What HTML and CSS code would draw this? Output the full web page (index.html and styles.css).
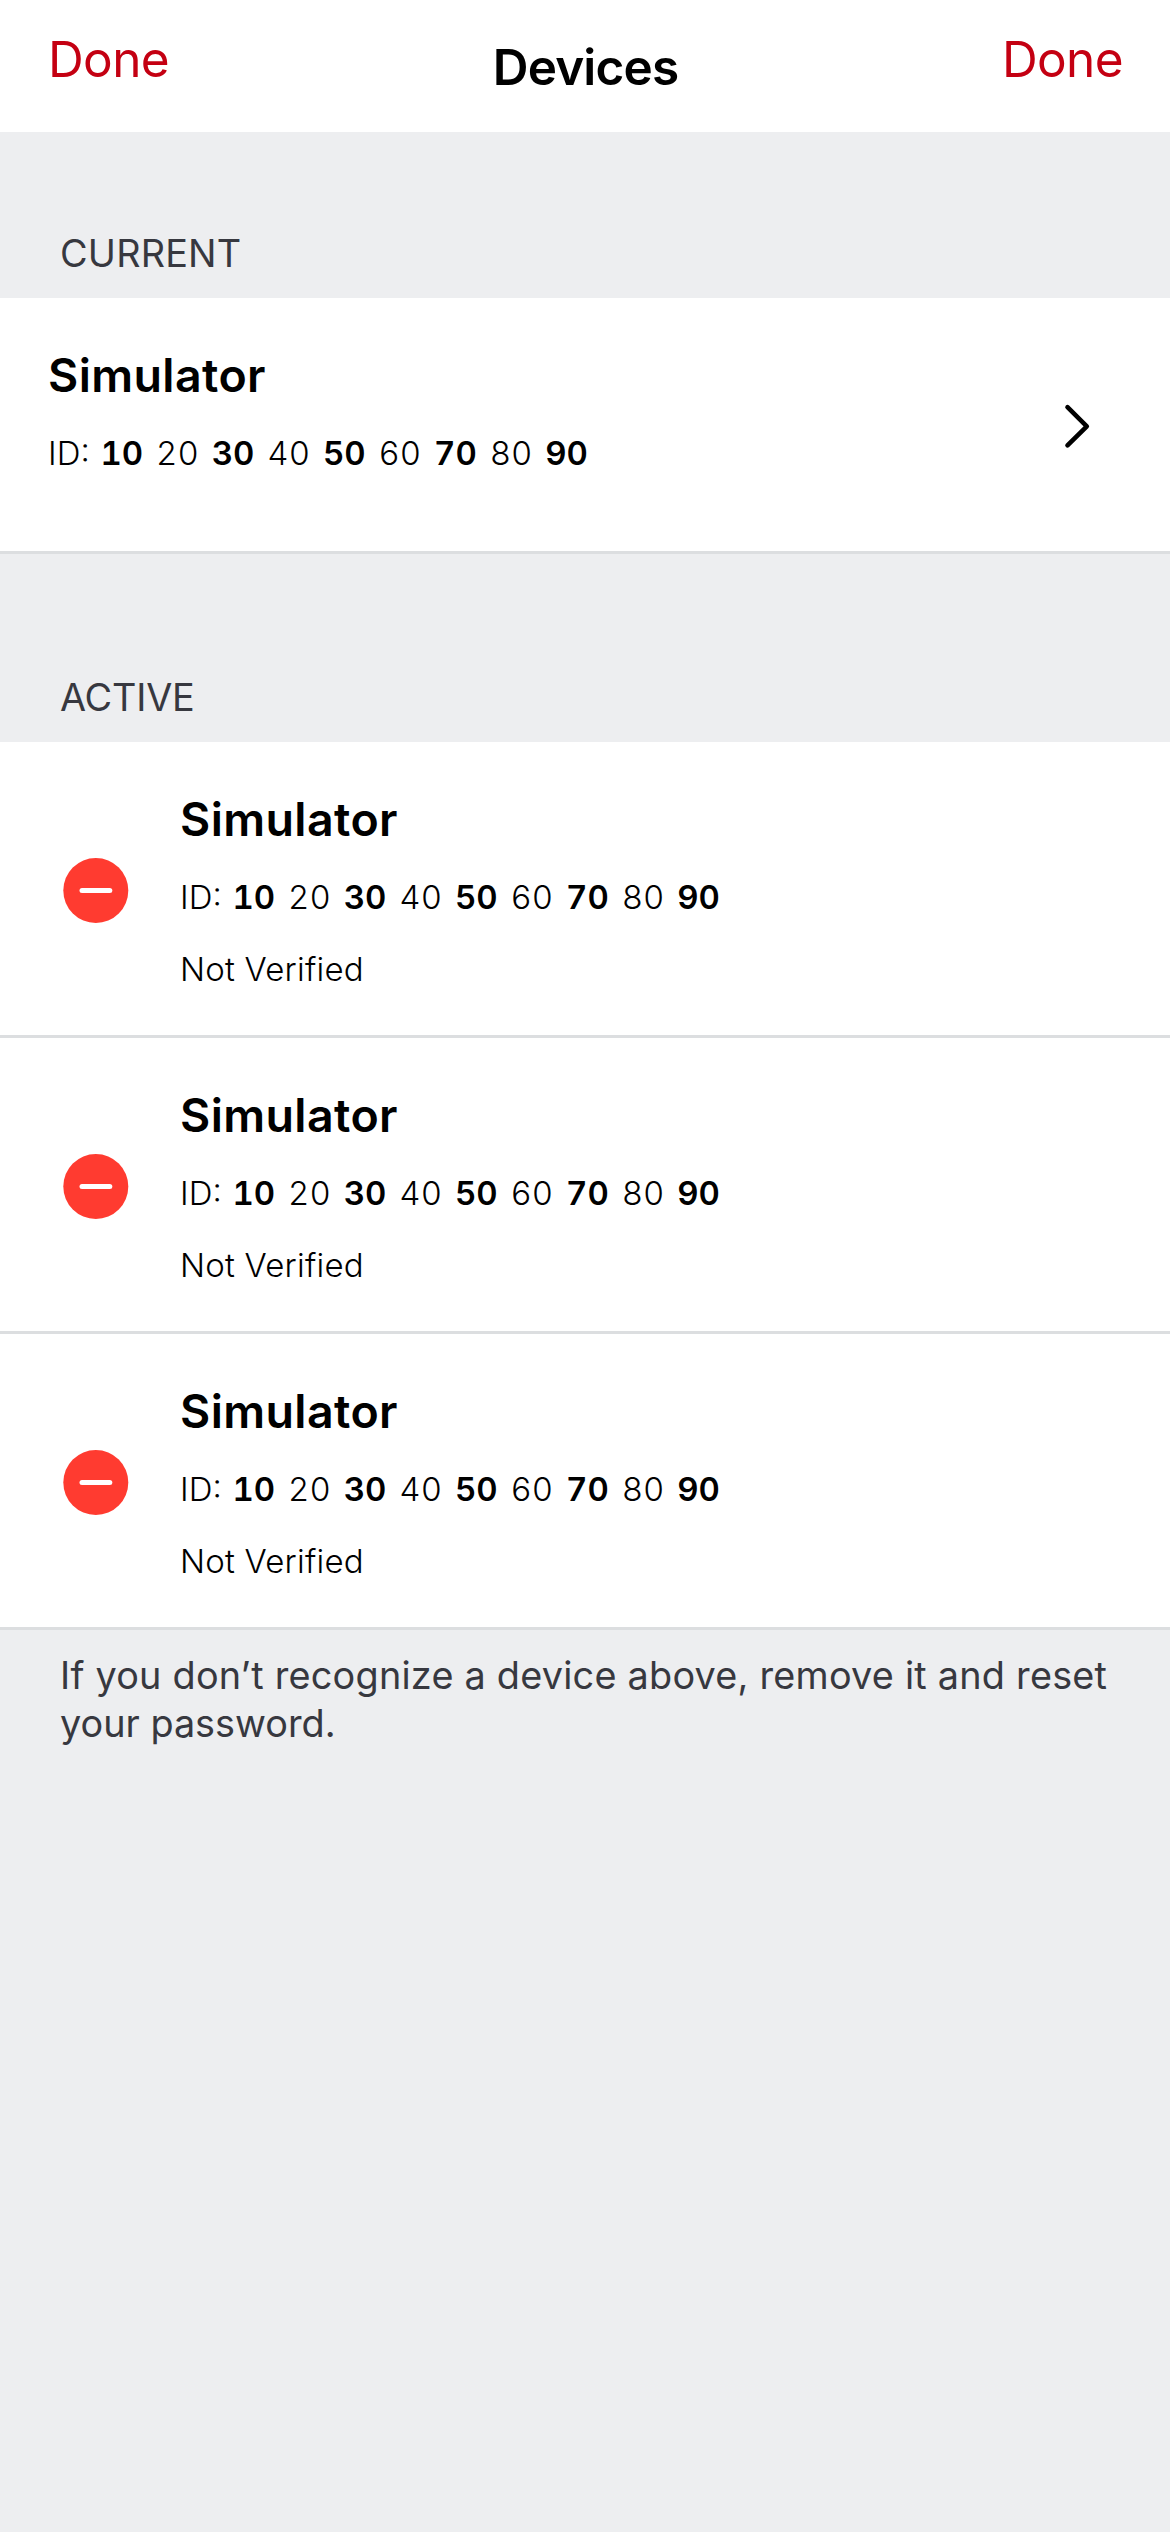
FILE: index.html
```html
<!DOCTYPE html>
<html lang="en">
<head>
<meta charset="utf-8">
<title>Devices</title>
<link rel="stylesheet" href="styles.css">
</head>
<body>
<header class="navbar">
  <a class="done">Done</a>
  <h1 class="title">Devices</h1>
  <a class="done done-right">Done</a>
</header>
<main>
  <h2 class="section-head current-head"><span>CURRENT</span></h2>
  <section class="row current">
    <div class="info">
      <div class="name"><span>Simulator</span></div>
      <div class="ident"><span class="label">ID:</span><b>10</b><span>20</span><b>30</b><span>40</span><b>50</b><span>60</span><b>70</b><span>80</span><b>90</b></div>
    </div>
    <svg class="chevron" width="30" height="48" viewBox="0 0 30 48"><path d="M6.5 4.2L25.8 23.3L6.5 42.4" fill="none" stroke="#000" stroke-width="4.6" stroke-linecap="round" stroke-linejoin="round"/></svg>
  </section>
  <h2 class="section-head active-head"><span>ACTIVE</span></h2>
  <section class="row">
    <svg class="remove" width="66" height="66" viewBox="0 0 66 66"><circle cx="32.8" cy="32.5" r="32.5" fill="#ff3b30"/><path d="M19 32.5H46.8" stroke="#fff" stroke-width="5" stroke-linecap="round"/></svg>
    <div class="info">
      <div class="name"><span>Simulator</span></div>
      <div class="ident"><span class="label">ID:</span><b>10</b><span>20</span><b>30</b><span>40</span><b>50</b><span>60</span><b>70</b><span>80</span><b>90</b></div>
      <div class="status"><span>Not Verified</span></div>
    </div>
  </section>
  <section class="row">
    <svg class="remove" width="66" height="66" viewBox="0 0 66 66"><circle cx="32.8" cy="32.5" r="32.5" fill="#ff3b30"/><path d="M19 32.5H46.8" stroke="#fff" stroke-width="5" stroke-linecap="round"/></svg>
    <div class="info">
      <div class="name"><span>Simulator</span></div>
      <div class="ident"><span class="label">ID:</span><b>10</b><span>20</span><b>30</b><span>40</span><b>50</b><span>60</span><b>70</b><span>80</span><b>90</b></div>
      <div class="status"><span>Not Verified</span></div>
    </div>
  </section>
  <section class="row">
    <svg class="remove" width="66" height="66" viewBox="0 0 66 66"><circle cx="32.8" cy="32.5" r="32.5" fill="#ff3b30"/><path d="M19 32.5H46.8" stroke="#fff" stroke-width="5" stroke-linecap="round"/></svg>
    <div class="info">
      <div class="name"><span>Simulator</span></div>
      <div class="ident"><span class="label">ID:</span><b>10</b><span>20</span><b>30</b><span>40</span><b>50</b><span>60</span><b>70</b><span>80</span><b>90</b></div>
      <div class="status"><span>Not Verified</span></div>
    </div>
  </section>
  <p class="note"><span class="line1">If you don’t recognize a device above, remove it and reset</span><br><span class="line2">your password.</span></p>
</main>
</body>
</html>
```
FILE: styles.css
```css
* { box-sizing: border-box; }
body {
  margin: 0;
  min-height: 2532px;
  background: #edeef0;
  color: #000;
  font-family: Inter, "Liberation Sans", sans-serif;
}
.navbar {
  display: grid;
  grid-template-columns: 1fr auto 1fr;
  height: 132px;
  padding: 0 47px 0 48px;
  background: #fff;
}
.done { font-size: 49.5px; line-height: 60px; padding-top: 29px; color: #c40012; letter-spacing: -0.6px; }
.done-right { text-align: right; }
.title { margin: 0; padding-top: 37px; font-size: 49.5px; line-height: 60px; font-weight: 600; letter-spacing: -0.85px; }
.section-head {
  margin: 0;
  display: flex;
  align-items: flex-end;
  padding: 0 60px 21px;
  font-size: 37.8px;
  line-height: 48px;
  font-weight: 400;
  color: #37383f;
  letter-spacing: 0.2px;
}
.current-head { height: 166px; }
.active-head { height: 188px; letter-spacing: -0.2px; }
.row {
  display: flex;
  height: 296px;
  background: #fff;
  border-bottom: 3px solid #dcdee0;
}
.current { height: 256px; padding: 0 79px 0 48px; justify-content: space-between; }
.chevron { margin-top: 105px; }
.remove { margin: 116px 51px 0 63px; }
.name { padding-top: 47px; font-size: 46.5px; line-height: 60px; font-weight: 600; letter-spacing: 0.4px; }
.ident {
  display: grid;
  grid-template-columns: 52.5px repeat(9, 55.6px);
  margin-top: 27px;
  font-size: 33px;
  line-height: 42px;
  font-weight: 300;
  font-variant-numeric: tabular-nums;
}
.label { font-variant-numeric: normal; }
.ident b { font-weight: 600; }
.status { margin-top: 30px; font-size: 33px; line-height: 42px; font-weight: 300; letter-spacing: 0.2px; }
.note { margin: 0; padding: 21px 60px; font-size: 37.8px; line-height: 48px; color: #37383f; white-space: nowrap; }
.line1 { letter-spacing: 0.23px; }
```
